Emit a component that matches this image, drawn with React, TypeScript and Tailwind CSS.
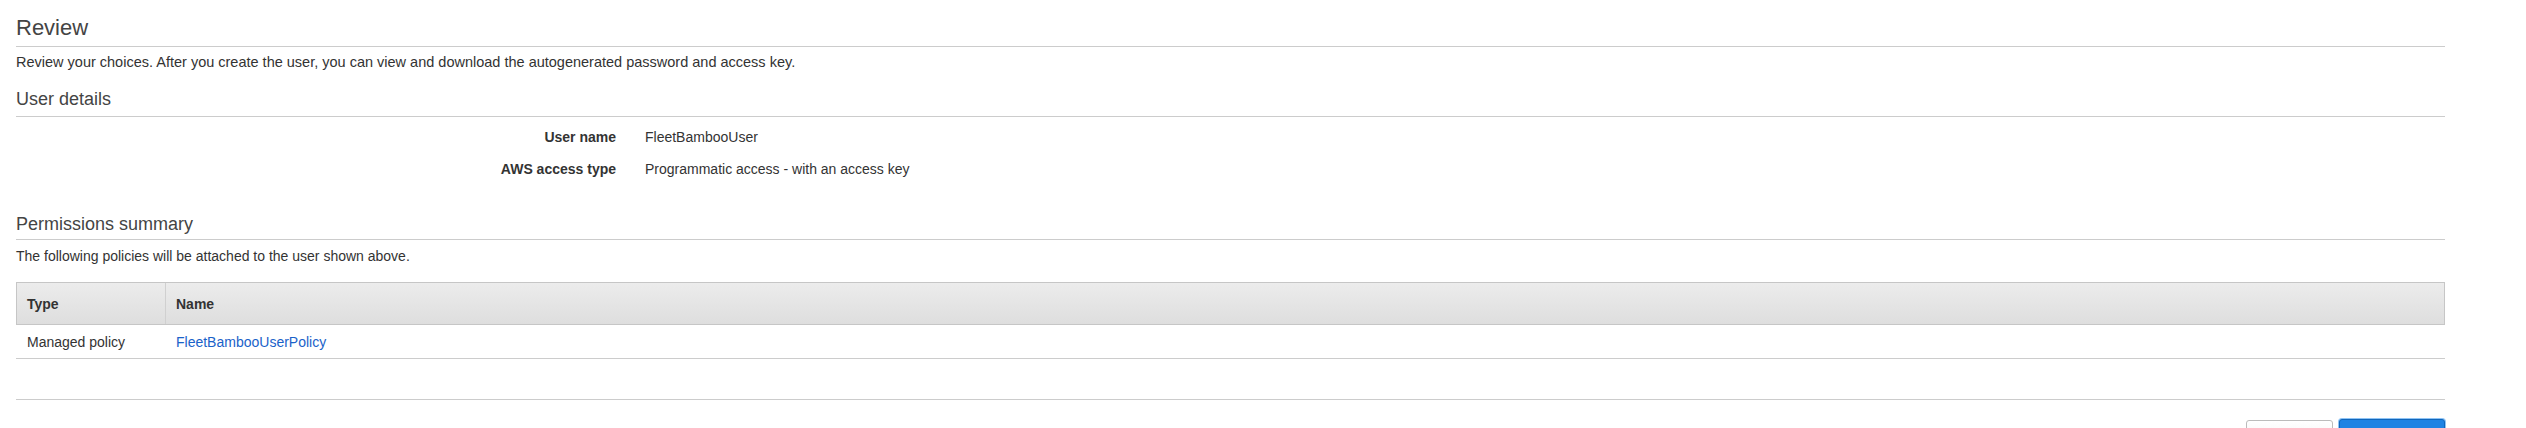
import React from "react";

const details = [
  { label: "User name", value: "FleetBambooUser" },
  { label: "AWS access type", value: "Programmatic access - with an access key" },
];

const App: React.FC = () => {
  return (
    <div className="w-[2526px] h-[428px] overflow-hidden bg-white font-['Liberation_Sans',Arial,sans-serif] text-[#333]">
      <div className="ml-4 w-[2429px]">
        {/* Review header */}
        <h1 className="pt-[14px] pb-1 text-[22px] leading-[28px] text-[#444] border-b border-[#ccc]">
          Review
        </h1>
        <p className="mt-[7px] text-[14.5px] leading-4">
          Review your choices. After you create the user, you can view and download the autogenerated password and access key.
        </p>

        {/* User details */}
        <h2 className="mt-[19px] pb-[7px] text-[18px] leading-5 text-[#444] border-b border-[#ccc]">
          User details
        </h2>
        <div className="mt-3 flex flex-col gap-4">
          {details.map((d) => (
            <div key={d.label} className="flex text-[14px] leading-4">
              <div className="w-[600px] text-right font-bold">{d.label}</div>
              <div className="pl-[29px]">{d.value}</div>
            </div>
          ))}
        </div>

        {/* Permissions summary */}
        <h2 className="mt-[37px] pb-[5px] text-[18px] leading-5 text-[#444] border-b border-[#ccc]">
          Permissions summary
        </h2>
        <p className="mt-2 text-[14px] leading-4">
          The following policies will be attached to the user shown above.
        </p>

        <div className="mt-[18px] text-[14px] leading-4">
          <div className="flex h-[43px] border border-[#c6c6c6] bg-gradient-to-b from-[#ececec] to-[#dedede] font-bold">
            <div className="w-[149px] flex items-center pl-[10px] border-r border-[#d0d0d0]">Type</div>
            <div className="flex-1 flex items-center pl-[10px]">Name</div>
          </div>
          <div className="flex h-[34px] border-b border-[#ccc]">
            <div className="w-[150px] flex items-center pl-[11px]">Managed policy</div>
            <div className="flex-1 flex items-center pl-[10px]">
              <a href="#" className="text-[#1a62c9]">FleetBambooUserPolicy</a>
            </div>
          </div>
        </div>

        {/* Footer */}
        <div className="mt-10 border-t border-[#ccc] pt-5 flex justify-end gap-[6px]">
          <button className="w-[87px] h-[30px] rounded-[3px] border border-[#bbb] bg-gradient-to-b from-white to-[#f0f0f0] text-[14px] text-[#333]">
            Previous
          </button>
          <button className="w-[106px] h-[30px] -mt-px rounded-[3px] border border-[#1166bb] bg-[#1f83e3] text-[14px] font-bold text-white shadow-[0_0_0_1px_#8ec4f5]">
            Create user
          </button>
        </div>
      </div>
    </div>
  );
};

export default App;
